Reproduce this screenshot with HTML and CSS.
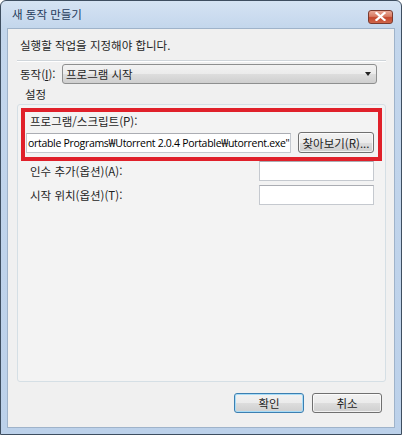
FILE: index.html
```html
<!DOCTYPE html>
<html lang="ko">
<head>
<meta charset="utf-8">
<link rel="stylesheet" href="styles.css">
</head>
<body>
<div class="window">
  <div class="titlebar">
    <span class="title">새 동작 만들기</span>
    <span class="close"><svg width="11" height="9" viewBox="0 0 11 9"><path d="M1.5 1 L9.5 8 M9.5 1 L1.5 8" stroke="#fff" stroke-width="2.2" stroke-linecap="square"/></svg></span>
  </div>
  <div class="client">
    <div class="intro">실행할 작업을 지정해야 합니다.</div>
    <div class="sep"></div>
    <div class="row-action">
      <span class="lbl">동작(<u>I</u>):</span>
      <div class="combo"><span>프로그램 시작</span><span class="arrow"></span></div>
    </div>
    <div class="group-title">설정</div>
    <div class="group">
      <div class="redbox">
        <div class="lbl-prog">프로그램/스크립트(P):</div>
        <div class="prog-row">
          <div class="input wide"><span class="val">ortable Programs₩Utorrent 2.0.4 Portable₩utorrent.exe"</span><span class="caret"></span></div>
          <button class="btn browse">찾아보기(R)...</button>
        </div>
      </div>
      <div class="field-row r1">
        <span>인수 추가(옵션)(A):</span>
        <div class="input small"></div>
      </div>
      <div class="field-row r2">
        <span>시작 위치(옵션)(T):</span>
        <div class="input small"></div>
      </div>
    </div>
    <div class="buttons">
      <button class="btn dlg default">확인</button>
      <button class="btn dlg">취소</button>
    </div>
  </div>
</div>
</body>
</html>
```

FILE: styles.css
```css
html, body {
  margin: 0;
  padding: 0;
  width: 402px;
  height: 435px;
  overflow: hidden;
  background: #ffffff;
}
body {
  font-family: "Noto Sans CJK KR", "Noto Sans", sans-serif;
  font-size: 11.5px;
  color: #1e1e1e;
}
.window {
  box-sizing: border-box;
  width: 402px;
  height: 435px;
  border: 1px solid #3e4e60;
  border-radius: 6px 6px 0 0;
  background: linear-gradient(#d5e3f3 0px, #c3d6ec 28px, #bcd1ea 100%);
  display: flex;
  flex-direction: column;
  padding: 0 6px 6px 6px;
}
.titlebar {
  height: 27px;
  flex: none;
  display: flex;
  align-items: center;
  justify-content: space-between;
  padding-left: 5px;
  padding-right: 2px;
}
.title {
  color: #1f3a5a;
  font-size: 11.5px;
  margin-top: -2px;
}
.close {
  width: 25px;
  height: 14px;
  box-sizing: border-box;
  border: 1px solid #7b3a2e;
  border-radius: 3px;
  background: linear-gradient(#eaa896 0%, #d77a62 45%, #c4472d 55%, #d0664a 100%);
  display: flex;
  align-items: center;
  justify-content: center;
  margin-top: 4px;
}
.client {
  flex: 1;
  background: #f0f0f0;
  border: 1px solid #9fb3ca;
  display: flex;
  flex-direction: column;
  padding: 0 8px 0 9px;
}
.intro {
  height: 30px;
  line-height: 30px;
  padding-left: 3px;
  margin-top: 1px;
}
.sep {
  height: 1px;
  background: #cfd5da;
  border-bottom: 1px solid #ffffff;
}
.row-action {
  display: flex;
  align-items: center;
  margin-top: 1px;
  height: 21px;
}
.lbl {
  width: 42px;
  padding-left: 3px;
  flex: none;
}
.combo {
  box-sizing: border-box;
  width: 315px;
  height: 20px;
  border: 1px solid #8e8f8f;
  border-radius: 3px;
  background: linear-gradient(#f2f2f2 0%, #ebebeb 50%, #dddddd 51%, #cfcfcf 100%);
  display: flex;
  align-items: center;
  justify-content: space-between;
  padding: 0 5px 0 3px;
}
.arrow {
  width: 0;
  height: 0;
  border-left: 3.5px solid transparent;
  border-right: 3.5px solid transparent;
  border-top: 4px solid #222;
}
.group-title {
  padding-left: 8px;
  height: 20px;
  line-height: 20px;
  margin-top: 0;
}
.group {
  box-sizing: border-box;
  height: 278px;
  border: 1px solid #d5dfe5;
  border-radius: 3px;
  background: #f3f3f3;
  padding: 3px 3px 0 3px;
}
.redbox {
  box-sizing: border-box;
  border: 4px solid #e0202a;
  padding: 1px 0 4px 1px;
}
.lbl-prog {
  padding-left: 4px;
  height: 17px;
  line-height: 17px;
}
.prog-row {
  display: flex;
  align-items: center;
  gap: 7px;
  margin-top: 2px;
}
.input {
  box-sizing: border-box;
  height: 20px;
  background: #ffffff;
  border: 1px solid #c5c9cf;
  border-top-color: #abadb3;
}
.input.wide {
  width: 265px;
  display: flex;
  align-items: center;
  overflow: hidden;
  white-space: nowrap;
  padding-left: 1px;
  font-family: "Open Sans", "Noto Sans", sans-serif;
  font-size: 10.5px;
  letter-spacing: -0.3px;
  color: #000;
}
.caret {
  width: 1px;
  height: 14px;
  background: #000;
  flex: none;
  margin-left: 1px;
}
.btn {
  box-sizing: border-box;
  font-family: "Noto Sans CJK KR", "Noto Sans", sans-serif;
  font-size: 11.5px;
  color: #1e1e1e;
  border: 1px solid #707070;
  border-radius: 3px;
  background: linear-gradient(#f2f2f2 0%, #ebebeb 50%, #dddddd 51%, #cfcfcf 100%);
  box-shadow: inset 0 0 0 1px rgba(255,255,255,0.7);
  padding: 0;
  margin: 0;
}
.browse {
  width: 76px;
  height: 21px;
}
.field-row {
  display: flex;
  align-items: center;
  justify-content: space-between;
  padding-left: 9px;
  padding-right: 8px;
  height: 19px;
}
.r1 { margin-top: 0; }
.r2 { margin-top: 5px; }
.input.small {
  width: 115px;
}
.buttons {
  display: flex;
  justify-content: flex-end;
  gap: 8px;
  margin-top: 11px;
  padding-right: 4px;
}
.dlg {
  width: 70px;
  height: 20px;
}
.default {
  border-color: #3c7fb1;
  box-shadow: inset 0 0 0 1px #a8dcf7;
}
```
